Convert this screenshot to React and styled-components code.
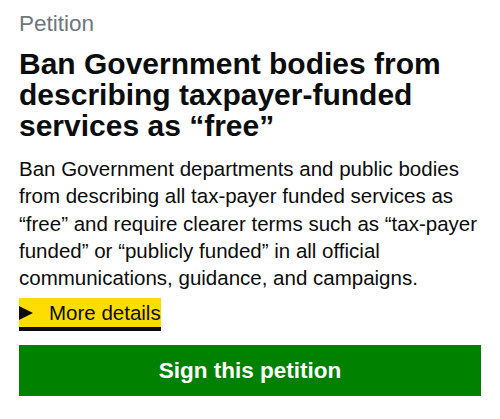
import React from "react";
import styled, { createGlobalStyle } from "styled-components";

const Global = createGlobalStyle`
  html, body { margin: 0; padding: 0; background: #fff; }
  body { font-family: "Liberation Sans", Arial, sans-serif; color: #0b0c0c; }
`;

const Page = styled.main`
  padding: 11px 19px 0 19px;
  display: flex;
  flex-direction: column;
`;

const Caption = styled.span`
  font-size: 22.5px;
  line-height: 25px;
  color: #6f777b;
`;

const Heading = styled.h1`
  margin: 12px 0 0 0;
  font-size: 30px;
  line-height: 31px;
  font-weight: 700;
  color: #0b0c0c;
`;

const Body = styled.p`
  margin: 14px 0 0 0;
  font-size: 20.5px;
  line-height: 27.25px;
  color: #0b0c0c;
`;

const Details = styled.button`
  align-self: flex-start;
  margin-top: 7px;
  display: flex;
  align-items: center;
  gap: 16px;
  height: 28.5px;
  padding: 0;
  border: 0;
  background: #ffdd00;
  box-shadow: 0 4px 0 #0b0c0c;
  font-family: inherit;
  font-size: 20.5px;
  line-height: 28px;
  color: #0b0c0c;
  cursor: pointer;
`;

const Triangle = styled.span`
  width: 0;
  height: 0;
  border-top: 7px solid transparent;
  border-bottom: 7px solid transparent;
  border-left: 14px solid #0b0c0c;
`;

const SignButton = styled.button`
  margin-top: 18px;
  height: 51.5px;
  border: 0;
  background: #008200;
  box-shadow: 0 2px 0 #003300;
  color: #fff;
  font-family: inherit;
  font-size: 22.5px;
  font-weight: 700;
  cursor: pointer;
`;

export default function App() {
  return (
    <>
      <Global />
      <Page>
        <Caption>Petition</Caption>
        <Heading>Ban Government bodies from describing taxpayer-funded services as “free”</Heading>
        <Body>
          Ban Government departments and public bodies from describing all tax-payer funded services as “free” and require clearer terms such as “tax-payer funded” or “publicly funded” in all official communications, guidance, and campaigns.
        </Body>
        <Details>
          <Triangle />
          More details
        </Details>
        <SignButton>Sign this petition</SignButton>
      </Page>
    </>
  );
}
